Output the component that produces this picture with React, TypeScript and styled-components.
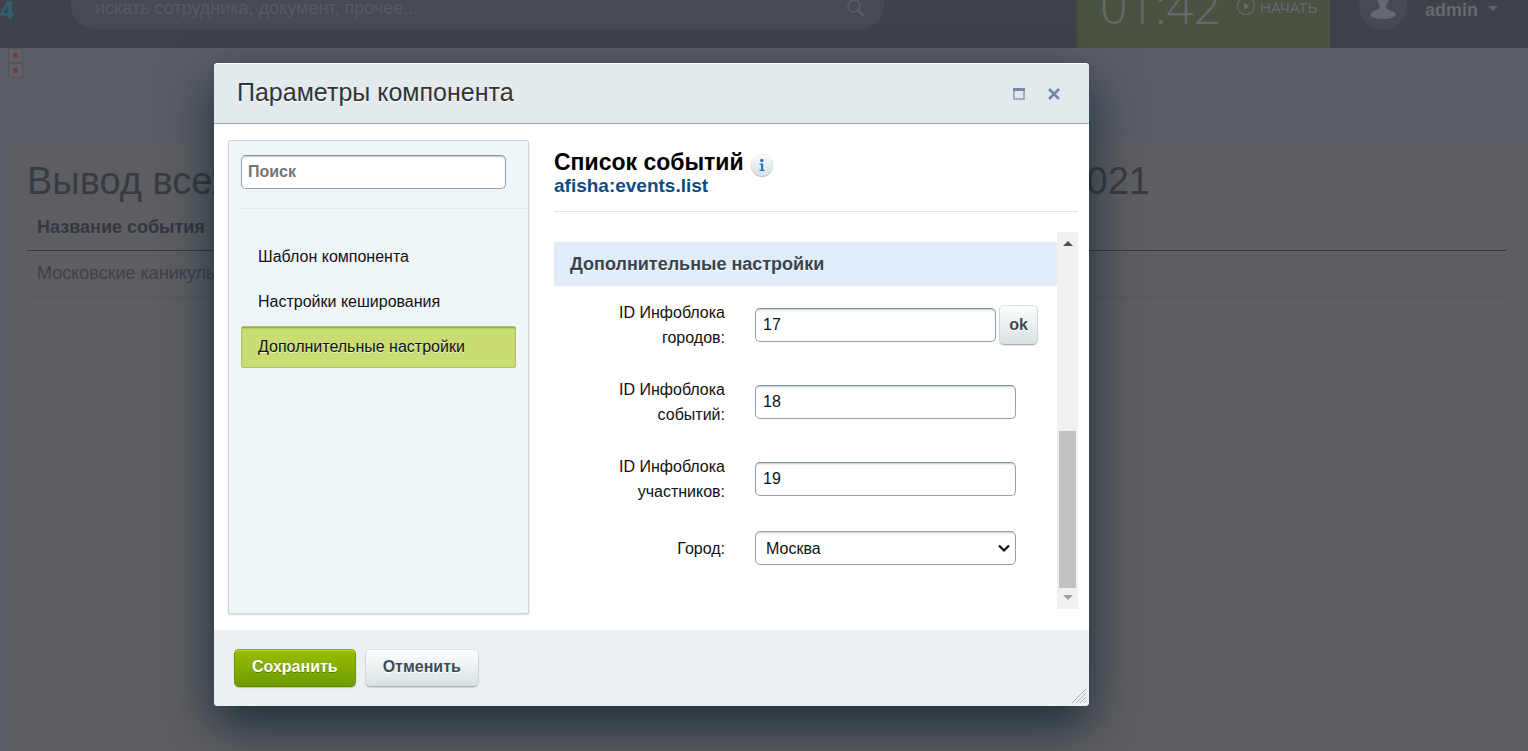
import React, { useState } from "react";
import styled, { createGlobalStyle } from "styled-components";

const GlobalStyle = createGlobalStyle`
  *, *::before, *::after { box-sizing: border-box; }
  html, body, #root { height: 100%; }
  body {
    margin: 0;
    overflow: hidden;
    background: #5a5d65;
    font-family: "Liberation Sans", Arial, sans-serif;
  }
  button, input, select { font-family: inherit; }
`;

const Page = styled.div`
  min-height: 100%;
  display: flex;
  flex-direction: column;
`;

const TopBar = styled.header`
  height: 48px;
  flex: none;
  display: flex;
  justify-content: space-between;
  overflow: hidden;
  background: #3e424b;
`;

const TopLeft = styled.div`
  flex: 1;
  display: flex;
  align-items: flex-start;
`;

const LogoTail = styled.a`
  width: 71px;
  color: #335d6f;
  font-size: 26px;
  font-weight: bold;
  line-height: 20px;
  text-decoration: none;
`;

const GlobalSearch = styled.label`
  flex: 0 0 813px;
  height: 29px;
  padding: 0 18px 0 24px;
  display: flex;
  align-items: flex-start;
  background: #464a53;
  border-radius: 0 0 24px 24px;
`;

const GlobalSearchInput = styled.input`
  flex: 1;
  height: 24px;
  margin-top: -4px;
  padding: 0;
  border: 0;
  outline: 0;
  background: none;
  color: #565a61;
  font-size: 18px;
  &::placeholder { color: #565a61; opacity: 1; }
`;

const TopRight = styled.div`
  display: flex;
`;

const Clock = styled.div`
  width: 253px;
  padding-left: 23px;
  display: flex;
  align-items: flex-start;
  gap: 16px;
  background: #4a5242;
  color: #666a6c;
`;

const Time = styled.span`
  width: 120px;
  height: 24px;
  display: flex;
  align-items: flex-end;
  font-family: "Open Sans", sans-serif;
  font-weight: 300;
  font-size: 48px;
  line-height: 36px;
`;

const StartButton = styled.button`
  padding: 0;
  border: 0;
  display: flex;
  align-items: center;
  gap: 4px;
  height: 14px;
  background: none;
  color: inherit;
  font-size: 15px;
`;

const UserMenu = styled.button`
  width: 198px;
  height: 30px;
  padding: 0 0 0 29px;
  border: 0;
  display: flex;
  align-items: flex-start;
  background: none;
  color: #66696f;
  font-size: 18px;
  font-weight: bold;
  line-height: 20px;
  text-align: left;
`;

const UserName = styled.span`
  padding-left: 18px;
  padding-right: 10px;
`;

const Markers = styled.div`
  height: 92px;
  flex: none;
  padding: 0 8px;
  display: flex;
  flex-direction: column;
`;

const Marker = styled.span`
  width: 15px;
  height: 15px;
  display: flex;
  align-items: center;
  justify-content: center;
  border: 1px solid #515257;
  background: #5f6066;
  &::after {
    content: "";
    width: 5px;
    height: 5px;
    border-radius: 50%;
    background: #77363f;
  }
`;

const Content = styled.main`
  flex: 1;
  margin: 0 0 0 8px;
  padding: 17px 22px 0 19px;
  background: #5e5e62;
`;

const PageTitle = styled.h1`
  max-width: 1123px;
  margin: 0;
  display: flex;
  justify-content: space-between;
  color: #373b43;
  font-size: 38px;
  font-weight: normal;
  line-height: 48px;
  white-space: nowrap;
`;

const EventTable = styled.table`
  width: 100%;
  border-collapse: collapse;
  text-align: left;
  font-size: 18px;
  th, td { padding: 0 10px; }
  th {
    height: 45px;
    color: #33373f;
    border-bottom: 1px solid #33373f;
  }
  td {
    height: 47px;
    color: #3e4249;
    font-weight: normal;
    border-bottom: 1px solid #56575c;
  }
`;

const Dialog = styled.section`
  position: absolute;
  top: 63px;
  left: 214px;
  width: 875px;
  display: flex;
  flex-direction: column;
  border-radius: 4px;
  background: #fff;
  box-shadow: 0 20px 50px rgba(3, 29, 41, 0.75);
`;

const DialogHeader = styled.header`
  height: 61px;
  padding: 0 26px 0 23px;
  display: flex;
  align-items: center;
  gap: 17px;
  background: #e2eaed;
  border-top: 1px solid #fff;
  border-bottom: 1px solid #9fa5a8;
  border-radius: 4px 4px 0 0;
`;

const DialogTitle = styled.h2`
  flex: 1;
  margin: 0;
  padding-bottom: 3px;
  color: #333;
  font-size: 25px;
  font-weight: normal;
  text-shadow: 0 1px 0 #fff;
`;

const IconButton = styled.button`
  width: 18px;
  height: 18px;
  padding: 0;
  border: 0;
  display: flex;
  align-items: center;
  justify-content: center;
  background: none;
`;

const DialogBody = styled.div`
  padding: 16px 11px 16px 14px;
  display: flex;
  gap: 25px;
`;

const Sidebar = styled.aside`
  flex: 0 0 301px;
  height: 474px;
  border: 1px solid #ced5d8;
  border-radius: 2px;
  background: #eef6fa;
  box-shadow: 0 1px 2px rgba(0, 0, 0, 0.15);
`;

const SidebarSearch = styled.div`
  margin-left: 12px;
  padding: 14px 22px 19px 0;
  border-bottom: 1px solid #e2e9ec;
`;

const Field = styled.input`
  width: 100%;
  height: 34px;
  padding: 0 7px;
  border: 1px solid #959fad;
  border-top-color: #87919c;
  border-radius: 5px;
  outline: 0;
  background: #fff;
  box-shadow: inset 0 2px 2px -1px rgba(100, 120, 130, 0.4);
  color: #111;
  font-size: 16px;
`;

const SearchField = styled(Field)`
  padding: 0 6px;
  font-weight: bold;
  &::placeholder { color: #757575; opacity: 1; }
`;

const SectionNav = styled.nav`
  padding: 27px 12px;
  display: flex;
  flex-direction: column;
  gap: 3px;
`;

const SectionLink = styled.a<{ $active?: boolean }>`
  height: 42px;
  padding: 0 16px;
  display: flex;
  align-items: center;
  border: 1px solid ${(p) => (p.$active ? "#afc363" : "transparent")};
  border-radius: 2px;
  background: ${(p) => (p.$active ? "#c9dd73" : "none")};
  box-shadow: ${(p) => (p.$active ? "inset 0 2px 2px -1px rgba(90, 110, 20, 0.6)" : "none")};
  color: #111;
  font-size: 16px;
  text-decoration: none;
  text-shadow: 0 1px 0 rgba(255, 255, 255, 0.7);
`;

const Main = styled.div`
  flex: 1;
  display: flex;
  flex-direction: column;
`;

const ComponentHead = styled.div`
  height: 72px;
  padding-top: 10px;
  border-bottom: 1px solid #e0e4e6;
`;

const ComponentTitle = styled.h3`
  height: 24px;
  margin: 0;
  display: flex;
  align-items: flex-start;
  gap: 6px;
  font-size: 23px;
  line-height: 24px;
  color: #000;
`;

const InfoButton = styled.button`
  width: 24px;
  height: 28px;
  padding: 3px 0 0;
  border: 0;
  background: none;
  svg { display: block; }
`;

const ComponentCode = styled.p`
  margin: 0;
  color: #0c4c82;
  font-size: 19px;
  font-weight: bold;
  line-height: 24px;
`;

const ScrollArea = styled.div`
  margin-top: 20px;
  height: 377px;
  display: flex;
`;

const Params = styled.form`
  flex: 1;
  padding-top: 10px;
`;

const GroupTitle = styled.h4`
  height: 44px;
  margin: 0 0 14px;
  padding: 0 16px;
  display: flex;
  align-items: center;
  border-radius: 2px;
  background: #e0ecf8;
  color: #38444f;
  font-size: 18px;
  text-shadow: 0 1px 0 #fff;
`;

const ParamRow = styled.div`
  margin-bottom: 27px;
  padding-right: 19px;
  display: flex;
  align-items: center;
  gap: 30px;
`;

const ParamLabel = styled.label`
  flex: 0 0 171px;
  padding-left: 50px;
  color: #111;
  font-size: 16px;
  line-height: 25px;
  text-align: right;
`;

const Control = styled.div`
  flex: 1;
  margin-right: 22px;
  display: flex;
  position: relative;
`;

const ControlWithButton = styled(Control)`
  margin-right: 0;
  align-items: center;
  gap: 3px;
`;

const CitySelect = styled.select`
  appearance: none;
  width: 100%;
  height: 34px;
  padding: 0 24px 0 10px;
  border: 1px solid #9a9fa3;
  border-radius: 5px;
  background: #fff;
  box-shadow: inset 0 2px 2px -1px rgba(100, 120, 130, 0.4);
  color: #111;
  font-size: 16px;
`;

const SelectArrow = styled.svg`
  position: absolute;
  right: 6px;
  top: 13px;
  pointer-events: none;
`;

const Button = styled.button<{ $primary?: boolean }>`
  height: 38px;
  padding: 0 17px 3px;
  border: 1px solid;
  border-color: ${(p) => (p.$primary ? "#7fa800 #6d9800 #5f8500" : "#dde3e5 #d0d7d9 #a9b0b3")};
  border-radius: 5px;
  background: ${(p) =>
    p.$primary ? "linear-gradient(#98bd00, #6f9c00)" : "linear-gradient(#fdfefe, #d7e2e5)"};
  box-shadow: ${(p) =>
    p.$primary
      ? "inset 0 1px 0 #bbd61c, 0 1px 1px rgba(0, 0, 0, 0.2)"
      : "0 1px 1px rgba(0, 0, 0, 0.1)"};
  color: ${(p) => (p.$primary ? "#fff" : "#3f4b54")};
  font-size: 16px;
  font-weight: bold;
  text-shadow: 0 1px 0 ${(p) => (p.$primary ? "rgba(70, 100, 0, 0.7)" : "#fff")};
`;

const OkButton = styled(Button)`
  height: 40px;
  padding: 0 9px;
`;

const ScrollBar = styled.div`
  flex: 0 0 21px;
  padding: 8px 2px;
  display: flex;
  flex-direction: column;
  align-items: center;
  justify-content: space-between;
  background: #f1f1f1;
  svg { display: block; }
`;

const ScrollThumb = styled.div`
  width: 17px;
  height: 157px;
  margin-top: auto;
  margin-bottom: 7px;
  background: #c1c1c1;
`;

const DialogFooter = styled.footer`
  height: 76px;
  padding: 19px 20px;
  display: flex;
  gap: 9px;
  background: #ebf0f3;
  border-radius: 0 0 4px 4px;
`;

const ResizeGrip = styled.svg`
  position: absolute;
  right: 3px;
  bottom: 3px;
`;

const sections = ["Шаблон компонента", "Настройки кеширования", "Дополнительные настройки"];

export default function App() {
  const [values, setValues] = useState({ cities: "17", events: "18", members: "19" });
  const set = (key: keyof typeof values) => (e: React.ChangeEvent<HTMLInputElement>) =>
    setValues({ ...values, [key]: e.target.value });

  return (
    <>
      <GlobalStyle />
      <Page>
        <TopBar>
          <TopLeft>
            <LogoTail href="#">4</LogoTail>
            <GlobalSearch>
              <GlobalSearchInput placeholder="искать сотрудника, документ, прочее..." />
              <svg width="20" height="18" viewBox="0 0 20 18" fill="none" stroke="#5a5e66" strokeWidth="1.600">
                <circle cx="8" cy="6" r="6" />
                <path d="M12.500 10.500L17.500 16" strokeWidth="2.400" />
              </svg>
            </GlobalSearch>
          </TopLeft>
          <TopRight>
            <Clock>
              <Time>01:42</Time>
              <StartButton type="button">
                <svg width="20" height="20" viewBox="0 0 20 20">
                  <circle cx="10" cy="9" r="8.500" fill="none" stroke="currentColor" strokeWidth="1.200" />
                  <path d="M8 5l5 4-5 4z" fill="currentColor" />
                </svg>
                НАЧАТЬ
              </StartButton>
            </Clock>
            <UserMenu type="button">
              <svg width="48" height="30" viewBox="0 0 48 30">
                <circle cx="24" cy="6" r="24" fill="#464b53" />
                <ellipse cx="24" cy="-2" rx="6" ry="8" fill="#66696f" />
                <path d="M21 3h6v4q0 2 3 3 6 1 6.500 4.500V16q-4 3-12.500 3t-12.500-3v-1.500Q12 11 18 10q3-1 3-3z" fill="#66696f" />
              </svg>
              <UserName>admin</UserName>
              <svg width="10" height="16" viewBox="0 0 10 16">
                <path d="M0 6h10l-5 5z" fill="#5f636b" />
              </svg>
            </UserMenu>
          </TopRight>
        </TopBar>
        <Markers>
          <Marker />
          <Marker />
        </Markers>
        <Content>
          <PageTitle>
            <span>Вывод всех</span>
            <span>2021</span>
          </PageTitle>
          <EventTable>
            <thead>
              <tr><th scope="col">Название события</th></tr>
            </thead>
            <tbody>
              <tr><td>Московские каникулы</td></tr>
            </tbody>
          </EventTable>
        </Content>
      </Page>

      <Dialog role="dialog" aria-labelledby="dialog-title">
        <DialogHeader>
          <DialogTitle id="dialog-title">Параметры компонента</DialogTitle>
          <IconButton type="button" aria-label="Развернуть">
            <svg width="12" height="12" viewBox="0 0 12 12">
              <path d="M1 1h10v10H1z" fill="none" stroke="#8a9ab0" strokeWidth="1.500" />
              <path d="M0 0h12v3H0z" fill="#7589a6" />
            </svg>
          </IconButton>
          <IconButton type="button" aria-label="Закрыть">
            <svg width="12" height="12" viewBox="0 0 12 12">
              <path d="M1 1l10 10M11 1L1 11" stroke="#7589a6" strokeWidth="2.600" />
            </svg>
          </IconButton>
        </DialogHeader>

        <DialogBody>
          <Sidebar>
            <SidebarSearch>
              <SearchField type="text" placeholder="Поиск" aria-label="Поиск" />
            </SidebarSearch>
            <SectionNav>
              {sections.map((name, i) => (
                <SectionLink key={name} href="#" $active={i === 2}>{name}</SectionLink>
              ))}
            </SectionNav>
          </Sidebar>

          <Main>
            <ComponentHead>
              <ComponentTitle>
                Список событий
                <InfoButton type="button" aria-label="Информация">
                  <svg width="24" height="25" viewBox="0 0 24 25">
                    <defs>
                      <linearGradient id="info-fill" x1="0" y1="0" x2="0" y2="1">
                        <stop offset="0" stopColor="#fbfcfd" />
                        <stop offset="1" stopColor="#d8e1e5" />
                      </linearGradient>
                    </defs>
                    <circle cx="12" cy="13" r="11" fill="#b4bcc0" />
                    <circle cx="12" cy="12" r="11" fill="url(#info-fill)" stroke="#dde2e5" strokeWidth="0.500" />
                    <circle cx="11.800" cy="7.500" r="1.700" fill="#2e77c8" />
                    <path d="M9.500 10.500h3.700v6.300h1.500V18H9.500v-1.200H11v-5H9.500z" fill="#2e77c8" />
                  </svg>
                </InfoButton>
              </ComponentTitle>
              <ComponentCode>afisha:events.list</ComponentCode>
            </ComponentHead>

            <ScrollArea>
              <Params>
                <GroupTitle>Дополнительные настройки</GroupTitle>
                <ParamRow>
                  <ParamLabel htmlFor="cities">ID Инфоблока городов:</ParamLabel>
                  <ControlWithButton>
                    <Field id="cities" value={values.cities} onChange={set("cities")} />
                    <OkButton type="button">ok</OkButton>
                  </ControlWithButton>
                </ParamRow>
                <ParamRow>
                  <ParamLabel htmlFor="events">ID Инфоблока событий:</ParamLabel>
                  <Control>
                    <Field id="events" value={values.events} onChange={set("events")} />
                  </Control>
                </ParamRow>
                <ParamRow>
                  <ParamLabel htmlFor="members">ID Инфоблока участников:</ParamLabel>
                  <Control>
                    <Field id="members" value={values.members} onChange={set("members")} />
                  </Control>
                </ParamRow>
                <ParamRow>
                  <ParamLabel htmlFor="city">Город:</ParamLabel>
                  <Control>
                    <CitySelect id="city" defaultValue="moscow">
                      <option value="moscow">Москва</option>
                    </CitySelect>
                    <SelectArrow width="12" height="9" viewBox="0 0 12 9" aria-hidden="true">
                      <path d="M1 1.500l5 5 5-5" fill="none" stroke="#111" strokeWidth="2.200" />
                    </SelectArrow>
                  </Control>
                </ParamRow>
              </Params>
              <ScrollBar aria-hidden="true">
                <svg width="10" height="6" viewBox="0 0 10 6"><path d="M0 6h10L5 1z" fill="#505050" /></svg>
                <ScrollThumb />
                <svg width="10" height="6" viewBox="0 0 10 6"><path d="M0 0h10L5 5z" fill="#a3a3a3" /></svg>
              </ScrollBar>
            </ScrollArea>
          </Main>
        </DialogBody>

        <DialogFooter>
          <Button type="button" $primary>Сохранить</Button>
          <Button type="button">Отменить</Button>
        </DialogFooter>
        <ResizeGrip width="14" height="14" viewBox="0 0 14 14" stroke="#a9adaf" strokeWidth="1" aria-hidden="true">
          <path d="M0 14L14 0M4 14L14 4M8 14l6-6M12 14l2-2" />
        </ResizeGrip>
      </Dialog>
    </>
  );
}
